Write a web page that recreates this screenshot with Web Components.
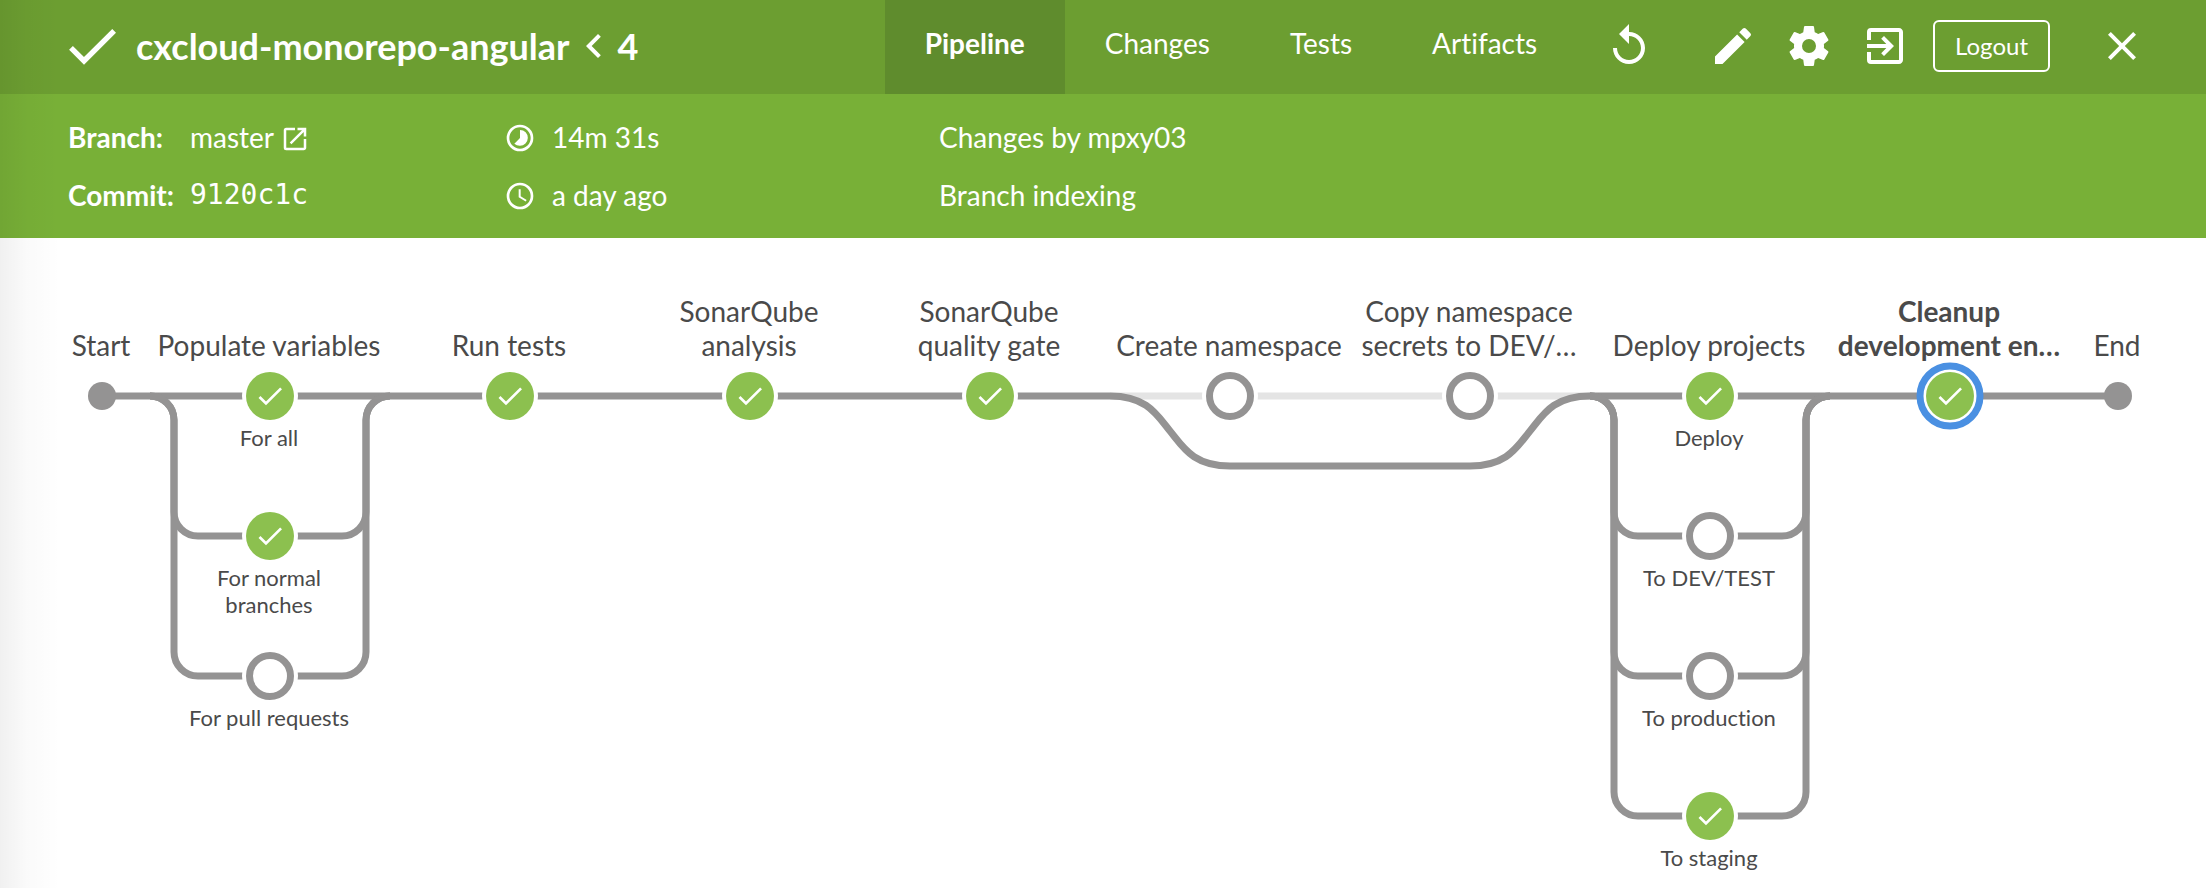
<!DOCTYPE html>
<html lang="en">
<head>
<meta charset="utf-8">
<title>cxcloud-monorepo-angular #4</title>
<style>
  body { margin: 0; background: #fff; color: #4a4a4a; font-family: Lato, "Open Sans", sans-serif; font-size: 28px; line-height: 34px; font-variant-ligatures: none; }
</style>
</head>
<body>
<run-page></run-page>

<script>
const define = (name, html, setup) => {
  const template = document.createElement('template');
  template.innerHTML = html;
  customElements.define(name, class extends HTMLElement {
    constructor() {
      super();
      this.attachShadow({ mode: 'open' }).append(template.content.cloneNode(true));
    }
    connectedCallback() { if (setup) setup(this, this.shadowRoot); }
  });
};

const ICONS = {
  check: '<path d="M9 16.17 4.83 12l-1.42 1.41L9 19 21 7l-1.41-1.41z"/>',
  left: '<path d="M15.41 7.41 14 6l-6 6 6 6 1.41-1.41L10.83 12z"/>',
  replay: '<path d="M12 5V1L7 6l5 5V7c3.31 0 6 2.69 6 6s-2.69 6-6 6-6-2.69-6-6H4c0 4.42 3.58 8 8 8s8-3.58 8-8-3.58-8-8-8z"/>',
  edit: '<path d="M3 17.25V21h3.75L17.81 9.94l-3.75-3.75L3 17.25zM20.71 7.04a1 1 0 0 0 0-1.41l-2.34-2.34a1 1 0 0 0-1.41 0l-1.83 1.83 3.75 3.75 1.83-1.83z"/>',
  settings: '<path d="M19.43 12.98c.04-.32.07-.64.07-.98s-.03-.66-.07-.98l2.11-1.65c.19-.15.24-.42.12-.64l-2-3.46c-.12-.22-.39-.3-.61-.22l-2.49 1c-.52-.4-1.08-.73-1.69-.98l-.38-2.65A.49.49 0 0 0 14 2h-4c-.25 0-.46.18-.49.42l-.38 2.65c-.61.25-1.17.59-1.69.98l-2.49-1c-.23-.09-.49 0-.61.22l-2 3.46c-.13.22-.07.49.12.64l2.11 1.65c-.04.32-.07.65-.07.98s.03.66.07.98l-2.11 1.65c-.19.15-.24.42-.12.64l2 3.46c.12.22.39.3.61.22l2.49-1c.52.4 1.08.73 1.69.98l.38 2.65c.03.24.24.42.49.42h4c.25 0 .46-.18.49-.42l.38-2.65c.61-.25 1.17-.59 1.69-.98l2.49 1c.23.09.49 0 .61-.22l2-3.46c.12-.22.07-.49-.12-.64l-2.11-1.65zM12 15.5a3.5 3.5 0 1 1 0-7 3.5 3.5 0 0 1 0 7z"/>',
  exit: '<path d="M10.09 15.59 11.5 17l5-5-5-5-1.41 1.41L12.67 11H3v2h9.67l-2.58 2.59zM19 3H5a2 2 0 0 0-2 2v4h2V5h14v14H5v-4H3v4a2 2 0 0 0 2 2h14c1.1 0 2-.9 2-2V5c0-1.1-.9-2-2-2z"/>',
  close: '<path d="M19 6.41 17.59 5 12 10.59 6.41 5 5 6.41 10.59 12 5 17.59 6.41 19 12 13.41 17.59 19 19 17.59 13.41 12z"/>',
  launch: '<path d="M19 19H5V5h7V3H5a2 2 0 0 0-2 2v14a2 2 0 0 0 2 2h14c1.1 0 2-.9 2-2v-7h-2v7zM14 3v2h3.59l-9.83 9.83 1.41 1.41L19 6.41V10h2V3h-7z"/>',
  timelapse: '<path d="M16.24 7.76A5.97 5.97 0 0 0 12 6v6l-4.24 4.24a6 6 0 0 0 8.48-8.48zM12 2a10 10 0 1 0 0 20 10 10 0 0 0 0-20zm0 18a8 8 0 1 1 0-16 8 8 0 0 1 0 16z"/>',
  clock: '<path d="M12 2a10 10 0 1 0 0 20 10 10 0 0 0 0-20zm0 18a8 8 0 1 1 0-16 8 8 0 0 1 0 16zm.5-13H11v6l5.25 3.15.75-1.23-4.5-2.67z"/>'
};

define('ui-icon', `
  <style>
    :host { display: inline-block; flex: none; width: 48px; height: 48px; }
    :host([size="large"]) { width: 64px; height: 64px; }
    :host([size="small"]) { width: 32px; height: 32px; }
    :host([size="tiny"]) { width: 30px; height: 30px; }
    svg { display: block; width: 100%; height: 100%; fill: currentColor; }
  </style>
  <svg viewBox="0 0 24 24" aria-hidden="true"></svg>`,
  (host, root) => { root.querySelector('svg').innerHTML = ICONS[host.getAttribute('name')]; });

define('run-header', `
  <style>
    :host { display: flex; align-items: center; height: 94px; padding: 0 60px; background: #6c9e31; color: #fff; }
    h1 { display: flex; align-items: center; margin: 0; padding-bottom: 2px; font-size: 36px; font-weight: 700; line-height: 44px; white-space: nowrap; }
    h1 a { color: inherit; text-decoration: none; }
    .name { margin-left: 12px; }
    nav { display: flex; align-self: stretch; margin-left: auto; }
    nav a { display: flex; align-items: center; padding: 0 40px 8px; color: inherit; text-decoration: none; }
    nav a[aria-current] { background: #5f8c2d; font-weight: 700; }
    .tools { display: flex; align-items: center; gap: 28px; margin-left: 28px; padding-bottom: 2px; }
    button { display: flex; margin: 0; padding: 0; border: 0; background: none; color: inherit; font: inherit; }
    .first { margin-right: 28px; }
    .logout { align-items: center; height: 52px; margin-left: -4px; padding: 0 20px; border: 2px solid #fff; border-radius: 6px; font-size: 24px; line-height: 28px; }
    .close { margin-left: 20px; }
  </style>
  <h1><ui-icon name="check" size="large"></ui-icon><a class="name" href="#activity">cxcloud-monorepo-angular</a><ui-icon name="left"></ui-icon><span>4</span></h1>
  <nav aria-label="Run">
    <a href="#pipeline" aria-current="page">Pipeline</a>
    <a href="#changes">Changes</a>
    <a href="#tests">Tests</a>
    <a href="#artifacts">Artifacts</a>
  </nav>
  <div class="tools">
    <button class="first" aria-label="Rerun"><ui-icon name="replay"></ui-icon></button>
    <button aria-label="Edit"><ui-icon name="edit"></ui-icon></button>
    <button aria-label="Configure"><ui-icon name="settings"></ui-icon></button>
    <button aria-label="Go to classic"><ui-icon name="exit"></ui-icon></button>
    <button class="logout">Logout</button>
    <button class="close" aria-label="Close"><ui-icon name="close"></ui-icon></button>
  </div>`);

define('run-details', `
  <style>
    :host { display: grid; grid-template-columns: 436px 435px 1fr; align-items: center; row-gap: 24px; height: 144px; padding: 0 68px; box-sizing: border-box; align-content: center; background: #78b037; color: #fff; }
    div { display: flex; align-items: flex-end; }
    b { width: 122px; }
    a { display: flex; align-items: flex-end; gap: 6px; color: inherit; text-decoration: none; }
    code { font: 28px/34px "DejaVu Sans Mono", monospace; }
    .time { gap: 16px; }
  </style>
  <div><b>Branch:</b><a href="#master">master <ui-icon name="launch" size="tiny"></ui-icon></a></div>
  <div class="time"><ui-icon name="timelapse" size="small"></ui-icon>14m 31s</div>
  <div>Changes by mpxy03</div>
  <div><b>Commit:</b><code>9120c1c</code></div>
  <div class="time"><ui-icon name="clock" size="small"></ui-icon>a day ago</div>
  <div>Branch indexing</div>`);

define('stage-label', `
  <style>
    :host { position: absolute; transform: translate(-50%, -100%); width: 232px; text-align: center; overflow-wrap: break-word; }
    :host([selected]) { font-weight: 700; }
    :host([step]) { transform: translateX(-50%); width: 172px; font-size: 22px; line-height: 27px; }
  </style>
  <slot></slot>`,
  host => {
    host.style.left = host.getAttribute('x') + 'px';
    host.style.top = host.getAttribute('y') + 'px';
  });

define('pipeline-graph', `
  <style>
    :host { display: block; position: relative; height: 650px; overflow: hidden; }
    .graph { display: block; width: 2206px; height: 650px; }
    .line { fill: none; stroke: #949393; stroke-width: 7; }
    .skipped { stroke: #e4e4e4; }
    .dot { fill: #949393; }
    .gap { fill: #fff; }
    .done { fill: #8cc04f; }
    .tick { fill: #fff; }
    .empty { fill: #fff; stroke: #949393; stroke-width: 7; }
    .ring { fill: #fff; stroke: #4a90e2; stroke-width: 7; }
  </style>
  <svg class="graph" viewBox="0 0 2206 650" role="img" aria-label="Pipeline stages"></svg>`,
  (host, root) => {
    const top = 158, row = 140, column = 240, first = 270;
    const stages = [
      ['Populate variables', [['For all', 1], ['For normal branches', 1], ['For pull requests', 0]]],
      ['Run tests', [['', 1]]],
      ['SonarQube<br>analysis', [['', 1]]],
      ['SonarQube<br>quality gate', [['', 1]]],
      ['Create namespace', [['', 0]]],
      ['Copy namespace<br>secrets to DEV/…', [['', 0]]],
      ['Deploy projects', [['Deploy', 1], ['To DEV/TEST', 0], ['To production', 0], ['To staging', 1]]],
      ['Cleanup<br>development en…', [['', 1]], true]
    ];
    let lines = `<path class="line skipped" d="M1110 ${top}H1590"/>
      <path class="line" d="M102 ${top}H1110C1147 ${top} 1157 177 1170 193C1183 209 1193 228 1230 228H1470C1507 228 1517 209 1530 193C1543 177 1553 ${top} 1590 ${top}H2118"/>`;
    let nodes = `<circle class="dot" cx="102" cy="${top}" r="14"/><circle class="dot" cx="2118" cy="${top}" r="14"/>`;
    let labels = `<stage-label x="101" y="124">Start</stage-label><stage-label x="2117" y="124">End</stage-label>`;
    stages.forEach(([name, steps, selected], i) => {
      const x = first + i * column;
      labels += `<stage-label x="${x - 1}" y="124"${selected ? ' selected' : ''}>${name}</stage-label>`;
      steps.forEach(([step, done], j) => {
        const y = top + j * row;
        if (j) lines += `<path class="line" d="M${x - 120} ${top}a24 24 0 0 1 24 24V${y - 24}a24 24 0 0 0 24 24H${x + 72}a24 24 0 0 0 24-24V${top + 24}a24 24 0 0 1 24-24"/>`;
        nodes += selected ? `<circle class="ring" cx="${x}" cy="${y}" r="30"/>` : `<circle class="gap" cx="${x}" cy="${y}" r="28"/>`;
        nodes += done
          ? `<circle class="done" cx="${x}" cy="${y}" r="24"/><svg class="tick" x="${x - 16}" y="${y - 16}" width="32" height="32" viewBox="0 0 24 24">${ICONS.check}</svg>`
          : `<circle class="empty" cx="${x}" cy="${y}" r="20.5"/>`;
        if (step) labels += `<stage-label step x="${x - 1}" y="${y + 28}">${step}</stage-label>`;
      });
    });
    const graph = root.querySelector('.graph');
    graph.innerHTML = lines + nodes;
    graph.insertAdjacentHTML('afterend', labels);
  });

define('run-page', `
  <style>
    :host { display: block; position: relative; min-height: 100vh; }
    .edge { position: absolute; inset: 0 auto 0 0; width: 60px; background: linear-gradient(to right, rgba(0,0,0,.06), rgba(0,0,0,.02) 45%, transparent); pointer-events: none; }
  </style>
  <run-header></run-header>
  <run-details></run-details>
  <pipeline-graph></pipeline-graph>
  <div class="edge"></div>`);
</script>
</body>
</html>
